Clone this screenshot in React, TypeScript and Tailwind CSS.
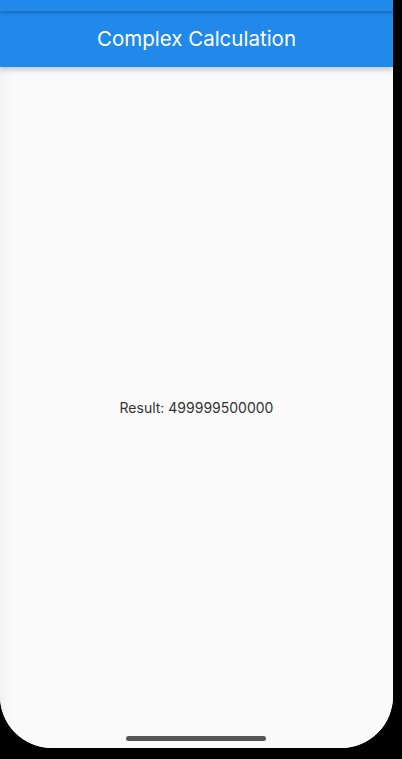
export default function App() {
  return (
    <div className="w-[402px] h-[759px] bg-black overflow-hidden" style={{ fontFamily: 'Inter, Roboto, "Noto Sans", sans-serif' }}>
      <div className="relative w-[393px] h-[748px] bg-[#fafafa] rounded-b-[52px] overflow-hidden flex flex-col">
        {/* status strip */}
        <div className="relative z-20 h-[11px] bg-[#2089ea] shadow-[0_2px_3px_rgba(0,0,0,0.22)]" />
        {/* app bar */}
        <div className="relative z-10 h-[56px] bg-[#2089ea] flex items-center justify-center shadow-[0_3px_5px_rgba(0,0,0,0.2)]">
          <span className="text-white text-[20.5px] leading-none">Complex Calculation</span>
        </div>
        {/* body */}
        <div className="flex-1 flex items-center justify-center bg-gradient-to-r from-[#f2f2f2] via-[#fafafa] via-[3%] to-[#fafafa]">
          <span className="text-[14px] text-[#333333]">Result: 499999500000</span>
        </div>
        {/* home indicator */}
        <div className="absolute left-[126px] bottom-[7px] w-[140px] h-[5px] rounded-full bg-[#555555]" />
      </div>
    </div>
  );
}
